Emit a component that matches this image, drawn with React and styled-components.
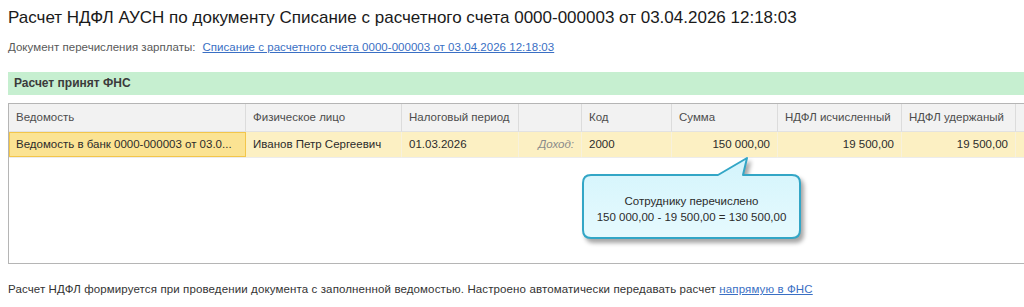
import React from "react";
import styled, { createGlobalStyle } from "styled-components";

const Global = createGlobalStyle`
  html, body { margin: 0; padding: 0; background: #fff; overflow: hidden; }
  body { font-family: Arial, "Liberation Sans", sans-serif; }
`;

const Page = styled.div`
  position: relative;
  width: 1024px;
  height: 307px;
  padding: 0 0 0 8px;
  box-sizing: border-box;
  overflow: hidden;
`;

const Title = styled.h1`
  margin: 0;
  padding-top: 6px;
  height: 24px;
  line-height: 24px;
  font-size: 17px;
  font-weight: normal;
  color: #1a1a1a;
  white-space: nowrap;
`;

const SubLine = styled.div`
  margin-top: 9px;
  height: 16px;
  line-height: 16px;
  font-size: 11.5px;
  letter-spacing: 0.03px;
  color: #595959;
  white-space: nowrap;
  display: flex;
  gap: 7px;
`;

const Link = styled.a`
  color: #3a6fc4;
  text-decoration: underline;
  cursor: pointer;
`;

const StatusBar = styled.div`
  margin-top: 17px;
  height: 23px;
  line-height: 23px;
  background: #c6efd0;
  padding-left: 6px;
  font-size: 12px;
  font-weight: bold;
  color: #3b3b3b;
`;

const TableWrap = styled.div`
  margin-top: 8px;
  width: 1100px;
  height: 161px;
  border: 1px solid #b5b5b5;
  border-right: none;
  box-sizing: border-box;
  background: #fff;
`;

const Grid = styled.div`
  display: grid;
  grid-template-columns: 237px 156px 117px 63px 90px 106px 124px 114px 80px;
`;

const HeadCell = styled.div`
  height: 27px;
  line-height: 27px;
  background: #f2f2f2;
  border-right: 1px solid #dcdcdc;
  border-bottom: 1px solid #e2e2e2;
  padding: 0 7px;
  font-size: 11.5px;
  color: #4d4d4d;
  white-space: nowrap;
  overflow: hidden;
`;

const Cell = styled.div`
  height: 25px;
  line-height: 25px;
  background: ${(p) => (p.$selected ? "#fbe393" : "#fcf0c3")};
  border-right: 1px solid ${(p) => (p.$selected ? "#f3c64a" : "#f7f1dd")};
  border-bottom: 1px solid #ececec;
  ${(p) =>
    p.$selected && `box-shadow: inset 0 0 0 1px #f3c64a; border-right: none;`}
  padding: 0 7px;
  font-size: 11.5px;
  color: ${(p) => (p.$muted ? "#8a8a8a" : "#2b2b2b")};
  font-style: ${(p) => (p.$muted ? "italic" : "normal")};
  text-align: ${(p) => (p.$right ? "right" : "left")};
  white-space: nowrap;
  overflow: hidden;
`;

const Footer = styled.div`
  margin-top: 17px;
  height: 16px;
  line-height: 16px;
  font-size: 11.5px;
  letter-spacing: 0.12px;
  color: #333;
  white-space: nowrap;
`;

const Callout = styled.div`
  position: absolute;
  left: 580px;
  top: 155px;
  width: 228px;
  height: 92px;
`;

const CalloutShape = styled.svg`
  position: absolute;
  inset: 0;
  filter: drop-shadow(3px 4px 2px rgba(0, 0, 0, 0.35));
`;

const CalloutText = styled.div`
  position: absolute;
  left: 3px;
  top: 39px;
  width: 217px;
  text-align: center;
  font-size: 11.5px;
  line-height: 15.5px;
  color: #2b2b2b;
`;

const headers = [
  "Ведомость",
  "Физическое лицо",
  "Налоговый период",
  "",
  "Код",
  "Сумма",
  "НДФЛ исчисленный",
  "НДФЛ удержаный",
  "",
];

export default function App() {
  return (
    <>
      <Global />
      <Page>
        <Title>
          Расчет НДФЛ АУСН по документу Списание с расчетного счета 0000-000003 от
          03.04.2026 12:18:03
        </Title>
        <SubLine>
          <span>Документ перечисления зарплаты:</span>
          <Link>Списание с расчетного счета 0000-000003 от 03.04.2026 12:18:03</Link>
        </SubLine>
        <StatusBar>Расчет принят ФНС</StatusBar>
        <TableWrap>
          <Grid>
            {headers.map((h, i) => (
              <HeadCell key={i}>{h}</HeadCell>
            ))}
            <Cell $selected>Ведомость в банк 0000-000003 от 03.0...</Cell>
            <Cell>Иванов Петр Сергеевич</Cell>
            <Cell>01.03.2026</Cell>
            <Cell $muted $right>Доход:</Cell>
            <Cell>2000</Cell>
            <Cell $right>150 000,00</Cell>
            <Cell $right>19 500,00</Cell>
            <Cell $right>19 500,00</Cell>
            <Cell />
          </Grid>
        </TableWrap>
        <Footer>
          Расчет НДФЛ формируется при проведении документа с заполненной ведомостью.
          Настроено автоматически передавать расчет <Link>напрямую в ФНС</Link>
        </Footer>
        <Callout>
          <CalloutShape width="228" height="92" viewBox="0 0 228 92">
            <defs>
              <linearGradient id="cg" x1="0" y1="0" x2="0" y2="1">
                <stop offset="0" stopColor="#d3f4fc" />
                <stop offset="1" stopColor="#e6fafe" />
              </linearGradient>
            </defs>
            <path
              d="M11 20 H138 L167 3 L163 20 H212 Q220 20 220 28 V75 Q220 83 212 83 H11 Q3 83 3 75 V28 Q3 20 11 20 Z"
              fill="url(#cg)"
              stroke="#33a6c6"
              strokeWidth="2"
              strokeLinejoin="round"
            />
          </CalloutShape>
          <CalloutText>
            Сотруднику перечислено
            <br />
            150 000,00 - 19 500,00 = 130 500,00
          </CalloutText>
        </Callout>
      </Page>
    </>
  );
}
